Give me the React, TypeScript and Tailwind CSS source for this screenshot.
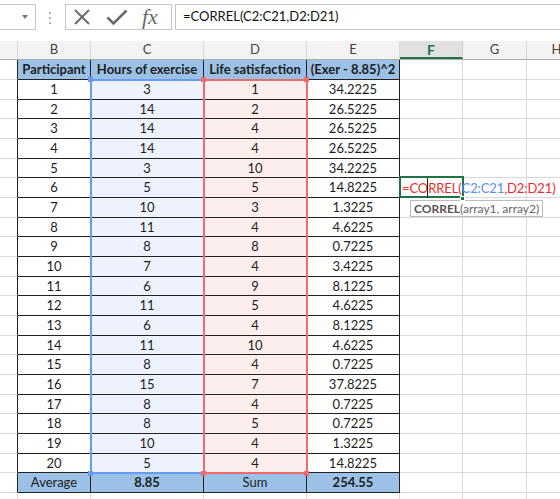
import React from "react";

const font = { fontFamily: "Lato, 'Open Sans', sans-serif" };

const hours = [3, 14, 14, 14, 3, 5, 10, 11, 8, 7, 6, 11, 6, 11, 8, 15, 8, 8, 10, 5];
const life = [1, 2, 4, 4, 10, 5, 3, 4, 8, 4, 9, 5, 4, 10, 4, 7, 4, 5, 4, 4];
const sq = [
  "34.2225", "26.5225", "26.5225", "26.5225", "34.2225", "14.8225", "1.3225", "4.6225", "0.7225", "3.4225",
  "8.1225", "4.6225", "8.1225", "4.6225", "0.7225", "37.8225", "0.7225", "0.7225", "1.3225", "14.8225",
];

const FormulaBar = () => (
  <div className="flex h-[41px] items-start pt-[4px]">
    <div className="relative h-[26px] w-[36px] border border-l-0 border-[#c6c6c6] bg-white">
      <div className="absolute left-[22px] top-[10px] h-0 w-0 border-x-[3.5px] border-t-[4px] border-x-transparent border-t-[#777]" />
    </div>
    <div className="ml-[13px] flex h-[26px] flex-col justify-center gap-[3px] pt-[1px]">
      <span className="h-[2px] w-[2px] bg-[#b5b5b5]" />
      <span className="h-[2px] w-[2px] bg-[#b5b5b5]" />
      <span className="h-[2px] w-[2px] bg-[#b5b5b5]" />
    </div>
    <div className="ml-[14px] flex h-[26px] w-[107px] items-center border border-[#c6c6c6] bg-white">
      <svg width="18" height="18" viewBox="0 0 18 18" className="ml-[7px]">
        <path d="M2 2 L16 16 M16 2 L2 16" stroke="#6a6a6a" strokeWidth="2" fill="none" />
      </svg>
      <svg width="22" height="18" viewBox="0 0 22 18" className="ml-[15px]">
        <path d="M1.5 9.5 L7.5 15.5 L20.5 2.5" stroke="#6a6a6a" strokeWidth="2.6" fill="none" />
      </svg>
      <span
        className="ml-[14px] text-[22px] italic leading-none text-[#6a6a6a]"
        style={{ fontFamily: "'Liberation Serif', serif" }}
      >
        fx
      </span>
    </div>
    <div className="ml-[3px] flex h-[26px] flex-1 items-center border border-r-0 border-[#c6c6c6] bg-white pl-[7px] text-[13px] text-[#111]">
      =CORREL(C2:C21,D2:D21)
    </div>
  </div>
);

const widths = ["w-[18px]", "w-[73px]", "w-[113px]", "w-[103px]", "w-[93px]", "w-[63px]", "w-[64px]", "w-[60px]"];

const ColumnHeaders = () => {
  const letters = ["", "B", "C", "D", "E", "F", "G", "H"];
  return (
    <div className="flex h-[19px] border-b border-[#ababab] bg-[#f3f3f3]">
      {letters.map((l, i) =>
        l === "F" ? (
          <div
            key={i}
            className={`${widths[i]} flex shrink-0 items-center justify-center border-r border-b-2 border-r-[#d0d0d0] border-b-[#217346] bg-[#e1e1e1] text-[14px] font-bold text-[#217346]`}
          >
            F
          </div>
        ) : (
          <div
            key={i}
            className={`${widths[i]} flex shrink-0 items-center justify-center border-r border-[#d8d8d8] text-[13px] text-[#444]`}
          >
            {l}
          </div>
        )
      )}
    </div>
  );
};

type RowProps = {
  h: string;
  cells: React.ReactNode[];
  kind: "head" | "data" | "avg" | "blank";
  extra?: React.ReactNode;
};

const Row = ({ h, cells, kind, extra }: RowProps) => {
  const inTable = kind !== "blank";
  const bg =
    kind === "head" || kind === "avg"
      ? ["bg-[#9bc2e6]", "bg-[#9bc2e6]", "bg-[#9bc2e6]", "bg-[#9bc2e6]"]
      : kind === "data"
      ? ["bg-white", "bg-[#eef2fc]", "bg-[#fdeeee]", "bg-white"]
      : ["bg-white", "bg-white", "bg-white", "bg-white"];
  return (
    <div className={`flex ${h}`}>
      <div
        className={`${widths[0]} shrink-0 border-b border-r border-b-[#d8d8d8] ${
          inTable ? "border-r-[#222]" : "border-r-[#d8d8d8]"
        }`}
      />
      {[1, 2, 3, 4].map((c) => (
        <div
          key={c}
          className={`${widths[c]} ${bg[c - 1]} flex shrink-0 items-center justify-center border-b border-r pt-[1px] text-[13px] text-[#1d1d1d] ${
            inTable ? "border-[#222]" : "border-[#d8d8d8]"
          } ${kind === "head" ? "font-bold" : ""} ${kind === "avg" && (c === 2 || c === 4) ? "font-bold" : ""}`}
        >
          {cells[c - 1]}
        </div>
      ))}
      <div className={`${widths[5]} relative shrink-0 border-b border-r border-[#d8d8d8]`}>{extra}</div>
      <div className={`${widths[6]} shrink-0 border-b border-r border-[#d8d8d8]`} />
      <div className={`${widths[7]} shrink-0 border-b border-r border-[#d8d8d8]`} />
    </div>
  );
};

const ActiveCell = () => (
  <>
    <div className="absolute left-[-1px] top-[-2px] z-10 h-[22px] w-[65px] border-2 border-[#217346]" />
    <div className="absolute right-[-3px] bottom-[-4px] z-20 h-[5px] w-[5px] border border-white bg-[#217346]" />
    <div className="absolute left-[27px] top-0 z-20 h-[20px] w-[1px] bg-[#222]" />
    <div className="absolute left-[2px] top-0 z-10 flex h-[20px] items-center whitespace-nowrap pt-[1px] text-[13px] tracking-[-0.1px] text-[#ee2b2b]">
      =CORREL(<span className="text-[#5b8ff0]">C2:C21</span>,D2:D21)
    </div>
    <div className="absolute left-[10px] top-[22px] z-10 flex h-[17px] items-center whitespace-nowrap border border-[#bcbcbc] bg-white px-[3px] text-[12px] text-[#666]">
      <span className="font-bold text-[#555]">CORREL</span>(array1, array2)
    </div>
  </>
);

const Corner = ({ color, pos }: { color: string; pos: string }) => (
  <div className={`absolute ${pos} h-[5px] w-[5px] ${color}`} />
);

export default function App() {
  const rowH = (i: number) => (i % 3 === 1 ? "h-[19px]" : "h-[20px]");
  return (
    <div className="h-[499px] w-[560px] overflow-hidden bg-white" style={font}>
      <FormulaBar />
      <ColumnHeaders />
      <div className="relative">
        <Row
          h="h-[20px]"
          kind="head"
          cells={["Participant", "Hours of exercise", "Life satisfaction", "(Exer - 8.85)^2"]}
        />
        {hours.map((hv, i) => (
          <Row
            key={i}
            h={rowH(i)}
            kind="data"
            cells={[i + 1, hv, life[i], sq[i]]}
            extra={i === 5 ? <ActiveCell /> : undefined}
          />
        ))}
        <Row h="h-[20px]" kind="avg" cells={["Average", "8.85", "Sum", "254.55"]} />
        <Row h="h-[20px]" kind="blank" cells={["", "", "", ""]} />

        {/* range highlights */}
        <div className="pointer-events-none absolute left-[90px] top-[19px] h-[395px] w-[115px] border-2 border-[#6a9af2]" />
        <Corner color="bg-[#6a9af2]" pos="left-[88px] top-[17px]" />
        <Corner color="bg-[#6a9af2]" pos="left-[88px] top-[411px]" />
        <div className="pointer-events-none absolute left-[203px] top-[19px] h-[395px] w-[105px] border-2 border-[#ee6b6f]" />
        <Corner color="bg-[#ee6b6f]" pos="left-[201px] top-[17px]" />
        <Corner color="bg-[#ee6b6f]" pos="left-[304px] top-[17px]" />
        <Corner color="bg-[#ee6b6f]" pos="left-[201px] top-[411px]" />
        <Corner color="bg-[#ee6b6f]" pos="left-[304px] top-[411px]" />
      </div>
    </div>
  );
}
